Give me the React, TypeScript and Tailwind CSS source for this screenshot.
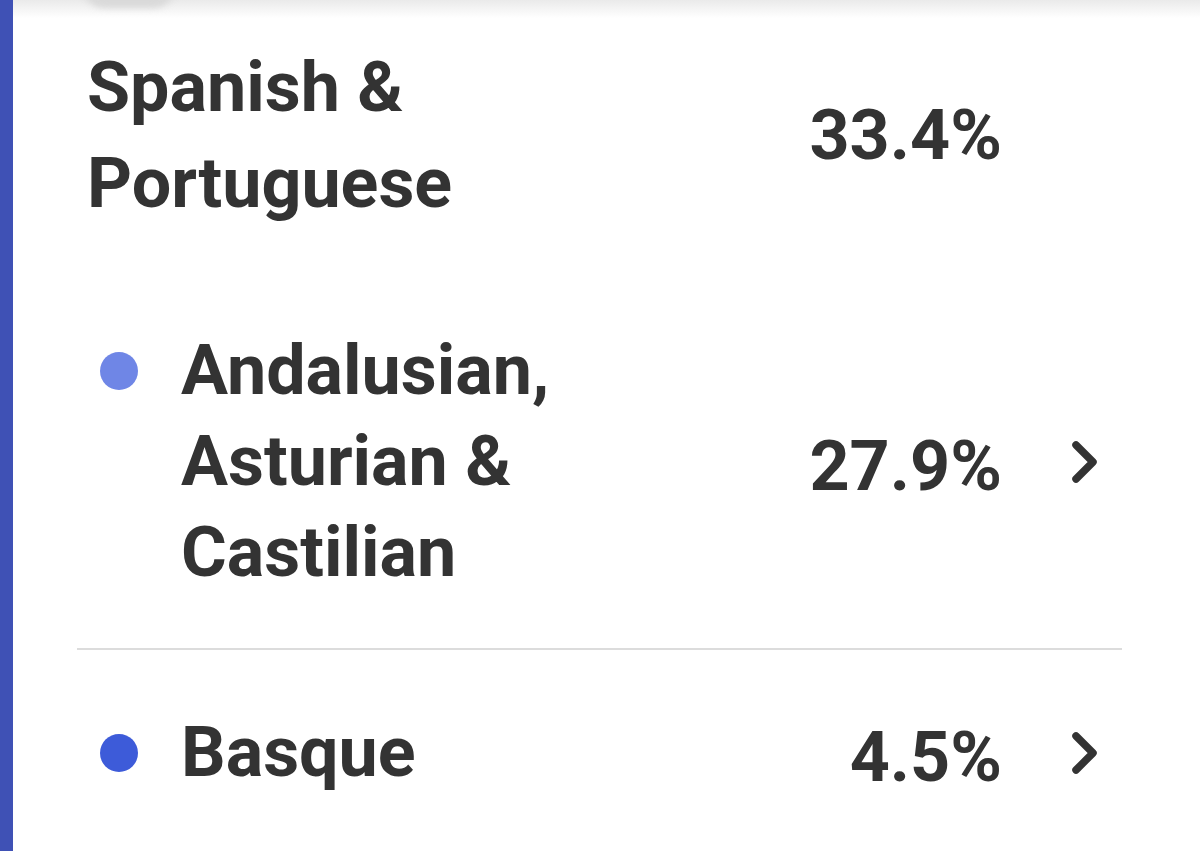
import React from "react";

function Chevron() {
  return (
    <svg width="32" height="48" viewBox="0 0 32 48" fill="none" className="block">
      <path d="M7 7 L24 24 L7 41" stroke="#333333" strokeWidth="7.5" strokeLinecap="round" strokeLinejoin="round" />
    </svg>
  );
}

type Item = { label: string; pct: string; color: string };

const items: Item[] = [
  { label: "Andalusian, Asturian & Castilian", pct: "27.9%", color: "#6f86e6" },
  { label: "Basque", pct: "4.5%", color: "#3d5bd9" },
];

export default function App() {
  return (
    <div
      className="flex h-[851px] w-[1200px] overflow-hidden bg-white text-[#333333]"
      style={{ fontFamily: "Roboto, 'Liberation Sans', sans-serif" }}
    >
      <div className="w-[13px] shrink-0 bg-[#3f51b5]" />
      <div className="relative flex-1">
        {/* top shadow from element above */}
        <div className="pointer-events-none absolute left-0 right-0 top-0 h-[18px] bg-gradient-to-b from-[#eaeaea] to-white" />
        <div className="pointer-events-none absolute left-[69px] top-[-38px] h-[46px] w-[94px] rounded-full bg-[#d9d9d9] blur-[3px]" />

        <div className="relative ml-[64px] w-[1045px] pt-[39px]">
          {/* heading row */}
          <div className="flex items-center pl-[10px]">
            <div className="max-w-[560px] text-[70px] font-bold leading-[96px]">Spanish &amp; Portuguese</div>
            <div className="ml-auto text-[70px] font-bold leading-[96px]">33.4%</div>
            <div className="w-[120px] shrink-0" />
          </div>

          <div className="mt-[42px]">
            {items.map((it) => (
              <div key={it.label} className="flex items-center border-b-2 border-[#dcdcdc] pb-[50px] pt-[52px]">
                <div className="flex flex-1 items-start pl-[23px]">
                  <div className="flex h-[91px] w-[81px] shrink-0 items-center">
                    <div className="h-[38px] w-[38px] rounded-full" style={{ backgroundColor: it.color }} />
                  </div>
                  <div className="max-w-[560px] text-[70px] font-bold leading-[91px]">{it.label}</div>
                </div>
                <div className="mt-[10px] text-[70px] font-bold leading-[91px]">{it.pct}</div>
                <div className="flex w-[120px] shrink-0 pl-[67px]">
                  <Chevron />
                </div>
              </div>
            ))}
          </div>
        </div>
      </div>
    </div>
  );
}
